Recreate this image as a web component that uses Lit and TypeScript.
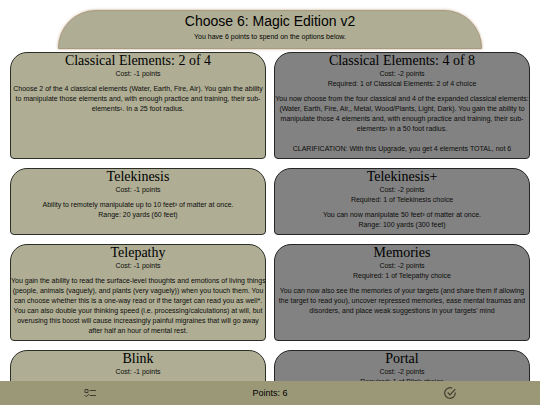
import { LitElement, html, css, nothing } from "lit";
import { customElement, property } from "lit/decorators.js";

interface Choice {
  title: string;
  cost: number;
  required?: string;
  text: string;
}

const CHOICES: Choice[] = [
  {
    title: "Classical Elements: 2 of 4",
    cost: -1,
    text: `Choose 2 of the 4 classical elements (Water, Earth, Fire, Air). You gain the ability
to manipulate those elements and, with enough practice and training, their sub-
elements¹. In a 25 foot radius.`,
  },
  {
    title: "Classical Elements: 4 of 8",
    cost: -2,
    required: "Classical Elements: 2 of 4",
    text: `You now choose from the four classical and 4 of the expanded classical elements:
(Water, Earth, Fire, Air,, Metal, Wood/Plants, Light, Dark). You gain the ability to
manipulate those 4 elements and, with enough practice and training, their sub-
elements¹ in a 50 foot radius.

CLARIFICATION: With this Upgrade, you get 4 elements TOTAL, not 6`,
  },
  {
    title: "Telekinesis",
    cost: -1,
    text: `Ability to remotely manipulate up to 10 feet³ of matter at once.
Range: 20 yards (60 feet)`,
  },
  {
    title: "Telekinesis+",
    cost: -2,
    required: "Telekinesis",
    text: `You can now manipulate 50 feet³ of matter at once.
Range: 100 yards (300 feet)`,
  },
  {
    title: "Telepathy",
    cost: -1,
    text: `You gain the ability to read the surface-level thoughts and emotions of living things
(people, animals (vaguely), and plants (very vaguely)) when you touch them. You
can choose whether this is a one-way read or if the target can read you as well*.
You can also double your thinking speed (i.e. processing/calculations) at will, but
overusing this boost will cause increasingly painful migraines that will go away
after half an hour of mental rest.`,
  },
  {
    title: "Memories",
    cost: -2,
    required: "Telepathy",
    text: `You can now also see the memories of your targets (and share them if allowing
the target to read you), uncover repressed memories, ease mental traumas and
disorders, and place weak suggestions in your targets’ mind`,
  },
  { title: "Blink", cost: -1, text: "" },
  { title: "Portal", cost: -2, required: "Blink", text: "" },
];

@customElement("choice-card")
export class ChoiceCard extends LitElement {
  @property({ attribute: false }) choice!: Choice;

  static styles = css`
    :host {
      display: grid;
      grid-template-columns: minmax(0, 1fr);
      min-width: 0;
    }
    .card {
      border: 1px solid #2c2f28;
      border-radius: 17px 17px 4px 4px;
      background: #afae95;
      color: #0c0c0a;
      text-align: center;
      padding: 0 0 4px;
    }
    .locked {
      background: #828282;
      border-color: #262626;
    }
    .title {
      margin: 0;
      font: 400 14px/16px "Liberation Serif", "Times New Roman", serif;
      color: #000;
    }
    .meta,
    .text {
      margin: 0;
      font-size: 7px;
      line-height: 10px;
    }
    .text {
      margin-top: 5px;
      white-space: pre;
    }
  `;

  render() {
    const c = this.choice;
    return html`
      <article class="card ${c.required ? "locked" : ""}">
        <h2 class="title">${c.title}</h2>
        <p class="meta">Cost: ${c.cost} points</p>
        ${c.required
          ? html`<p class="meta">Required: 1 of ${c.required} choice</p>`
          : nothing}
        <p class="text">${c.text}</p>
      </article>
    `;
  }
}

@customElement("app-root")
export class AppRoot extends LitElement {
  static styles = css`
    :host {
      display: flex;
      flex-direction: column;
      height: 100vh;
      font-family: "Liberation Sans", Arial, sans-serif;
      color: #000;
      background: #fff;
    }
    .page {
      flex: 1;
      min-height: 0;
      overflow-y: auto;
      scrollbar-width: none;
      padding: 10px;
    }
    .banner {
      margin: 0 48px 3px;
      padding-bottom: 6px;
      border: 1px solid #a99a82;
      border-radius: 38px 38px 0 0;
      background: #afae95;
      box-shadow: 0 0 3px #c0a888;
      text-align: center;
    }
    .heading {
      margin: 0;
      font-size: 14px;
      line-height: 20px;
      font-weight: 400;
    }
    .lead {
      margin: 1px 0 0;
      font-size: 7px;
      line-height: 10px;
    }
    .choices {
      display: grid;
      grid-template-columns: repeat(2, minmax(0, 1fr));
      gap: 9px 8px;
    }
    .bar {
      flex: none;
      display: grid;
      grid-template-columns: repeat(3, 1fr);
      align-items: center;
      justify-items: center;
      height: 24px;
      background: #9b9878;
      font-size: 9px;
      line-height: 12px;
    }
    .icon-button {
      display: flex;
      padding: 4px;
      border: 0;
      background: none;
      color: #3f3e30;
    }
    .icon {
      width: 12px;
      height: 12px;
      fill: none;
      stroke: currentColor;
    }
  `;

  render() {
    return html`
      <main class="page">
        <header class="banner">
          <h1 class="heading">Choose 6: Magic Edition v2</h1>
          <p class="lead">You have 6 points to spend on the options below.</p>
        </header>
        <section class="choices">
          ${CHOICES.map((c) => html`<choice-card .choice=${c}></choice-card>`)}
        </section>
      </main>
      <footer class="bar">
        <button class="icon-button" type="button" aria-label="Requirements">
          <svg class="icon" viewBox="0 0 12 12" stroke-width="1">
            <path d="M1 2.5h3v3h-3zM5.500 3.500H12M5.500 8.500H12M.5 8l1.700 1.700L5 7" />
          </svg>
        </button>
        <span>Points: 6</span>
        <button class="icon-button" type="button" aria-label="Selected choices">
          <svg class="icon" viewBox="0 0 12 12" stroke-width="1.200">
            <path d="M11.300 5.500V6A5.300 5.300 0 1 1 8.200 1.200M3.700 5.500L6 7.800L11.300 2.200" />
          </svg>
        </button>
      </footer>
    `;
  }
}
